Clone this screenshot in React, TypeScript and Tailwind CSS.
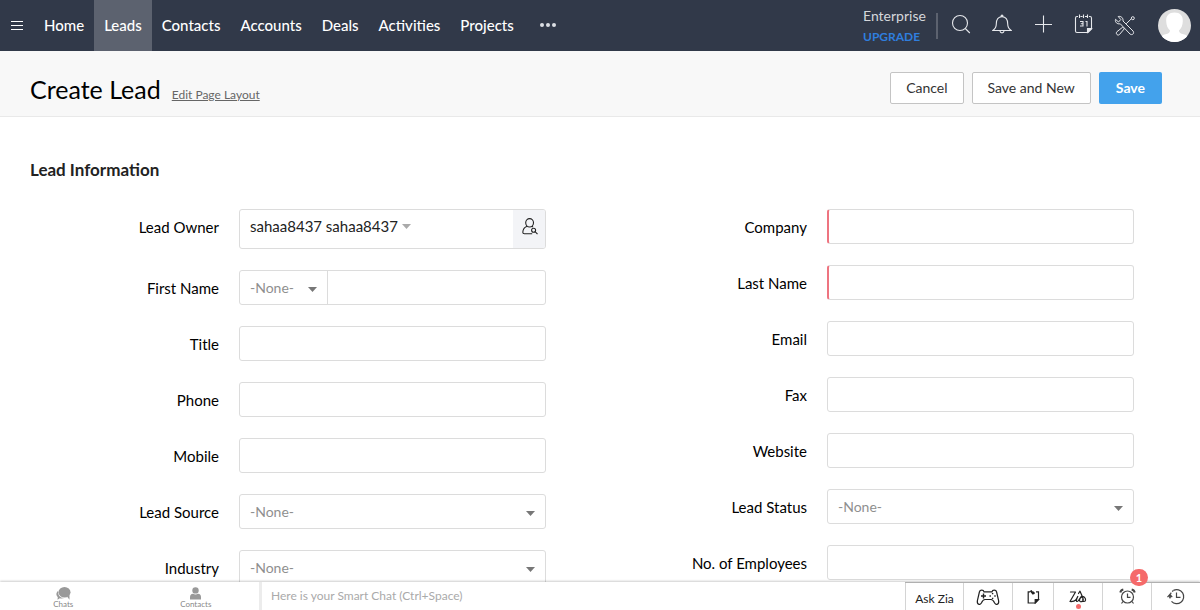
import React from "react";

const NAV = ["Home", "Leads", "Contacts", "Accounts", "Deals", "Activities", "Projects"];

type FieldKind = "text" | "required" | "select" | "owner" | "name";
type Field = { id: string; label: string; kind: FieldKind };

const LEFT: Field[] = [
  { id: "lead-owner", label: "Lead Owner", kind: "owner" },
  { id: "first-name", label: "First Name", kind: "name" },
  { id: "title", label: "Title", kind: "text" },
  { id: "phone", label: "Phone", kind: "text" },
  { id: "mobile", label: "Mobile", kind: "text" },
  { id: "lead-source", label: "Lead Source", kind: "select" },
  { id: "industry", label: "Industry", kind: "select" },
];

const RIGHT: Field[] = [
  { id: "company", label: "Company", kind: "required" },
  { id: "last-name", label: "Last Name", kind: "required" },
  { id: "email", label: "Email", kind: "text" },
  { id: "fax", label: "Fax", kind: "text" },
  { id: "website", label: "Website", kind: "text" },
  { id: "lead-status", label: "Lead Status", kind: "select" },
  { id: "employees", label: "No. of Employees", kind: "text" },
];

function Caret({ className }: { className: string }) {
  return (
    <svg viewBox="0 0 9 5" className={`h-[5px] w-[9px] ${className}`} fill="currentColor" aria-hidden="true">
      <path d="M0 0h9L4.5 5z" />
    </svg>
  );
}

function NoneSelect({ id, label }: { id: string; label?: string }) {
  return (
    <div className="grid h-full flex-1 items-center">
      <select
        id={id}
        aria-label={label}
        className="col-start-1 row-start-1 h-full w-full appearance-none bg-transparent pl-[10px] pr-6 text-[14px] text-[#8f8f8f] outline-none"
      >
        <option>-None-</option>
      </select>
      <Caret className="pointer-events-none col-start-1 row-start-1 mr-[10px] mt-1 justify-self-end text-[#777]" />
    </div>
  );
}

function Control({ field }: { field: Field }) {
  const box = "flex min-w-0 flex-1 overflow-hidden rounded-[3px] border border-[#dcdcdc] bg-white";
  switch (field.kind) {
    case "owner":
      return (
        <div className={`${box} h-10`}>
          <div className="flex flex-1 items-center pb-[5px] pl-[10px]">
            <select
              id={field.id}
              className="appearance-none bg-transparent text-[15px] text-[#222] outline-none [field-sizing:content]"
            >
              <option>sahaa8437 sahaa8437</option>
            </select>
            <Caret className="ml-1 text-[#aaa]" />
          </div>
          <button type="button" aria-label="Find user" className="flex w-8 items-center justify-center bg-[#f3f4f7] pb-[6px] pl-[2px]">
            <svg viewBox="0 0 16 17" className="h-[17px] w-4" fill="none" stroke="#222" strokeWidth="1.1" aria-hidden="true">
              <ellipse cx="7.6" cy="4.8" rx="3.9" ry="4.2" />
              <path d="M5.2 8.3C2.6 9.2 1 11.300 .8 14.200c0 1.200.4 1.500 1.600 1.500h7.800M9.800 8.300l1.200.7" />
              <circle cx="11.600" cy="12.200" r="2" />
              <path d="m13.100 13.700 2.400 2.400" />
            </svg>
          </button>
        </div>
      );
    case "name":
      return (
        <div className={`${box} h-[35px]`}>
          <div className="flex w-[88px] border-r border-[#dcdcdc]">
            <NoneSelect id="salutation" label="Salutation" />
          </div>
          <input id={field.id} type="text" className="min-w-0 flex-1 px-[10px] text-[15px] outline-none" />
        </div>
      );
    case "select":
      return (
        <div className={`${box} h-[35px]`}>
          <NoneSelect id={field.id} />
        </div>
      );
    case "required":
      return (
        <div className={`${box} h-[35px] border-l-2 border-l-[#ee7480]`}>
          <input id={field.id} type="text" required className="min-w-0 flex-1 px-[10px] text-[15px] outline-none" />
        </div>
      );
    default:
      return (
        <div className={`${box} h-[35px]`}>
          <input id={field.id} type="text" className="min-w-0 flex-1 px-[10px] text-[15px] outline-none" />
        </div>
      );
  }
}

function Column({ fields }: { fields: Field[] }) {
  return (
    <div className="flex flex-col gap-[21px] pr-[42px]">
      {fields.map((f) => (
        <div key={f.id} className="flex items-start gap-5">
          <label htmlFor={f.id} className="w-[219px] shrink-0 pt-[3px] text-right text-[15px] leading-[31px] text-black">
            {f.label}
          </label>
          <Control field={f} />
        </div>
      ))}
    </div>
  );
}

function TopBar() {
  const stroke = { fill: "none", stroke: "#e6e8ec", strokeWidth: 1.1 } as const;
  return (
    <header className="flex h-[51px] shrink-0 items-stretch bg-[#313949] text-white">
      <button type="button" aria-label="Menu" className="flex w-[34px] items-center justify-center">
        <svg viewBox="0 0 12 10" className="h-[10px] w-3" stroke="#fff" strokeWidth="1" aria-hidden="true">
          <path d="M0 .5h12M0 4.500h12M0 8.500h12" />
        </svg>
      </button>
      <nav className="flex">
        {NAV.map((n) => (
          <a
            key={n}
            href="#"
            className={`flex items-center px-[10px] text-[15px] font-medium ${n === "Leads" ? "bg-[#5c626f]" : ""}`}
          >
            {n}
          </a>
        ))}
      </nav>
      <button type="button" aria-label="More modules" className="flex w-12 items-center justify-center pb-[2px]">
        <svg viewBox="0 0 16 4" className="h-1 w-4" fill="#dcdfe4" aria-hidden="true">
          <circle cx="2" cy="2" r="2" />
          <circle cx="8" cy="2" r="2" />
          <circle cx="14" cy="2" r="2" />
        </svg>
      </button>
      <div className="ml-auto flex items-center pr-[9px]">
        <div className="flex h-[26px] w-[75px] flex-col justify-center border-r-2 border-[#5c626f]">
          <span className="text-[14px] leading-[21px] text-[#d5d7db]">Enterprise</span>
          <a href="#" className="text-[12px] font-bold leading-[21px] text-[#2f7ede]">UPGRADE</a>
        </div>
        <div className="ml-[13px] flex items-center gap-[21px] pb-[3px]">
          <button type="button" aria-label="Search" className="flex w-5 justify-center">
            <svg viewBox="0 0 20 20" className="size-5" {...stroke}>
              <circle cx="9" cy="9" r="7.500" />
              <path d="m14.300 14.500 4.500 4.500" />
            </svg>
          </button>
          <button type="button" aria-label="Notifications" className="flex w-5 justify-center">
            <svg viewBox="0 0 20 20" className="size-5" {...stroke}>
              <path d="M.8 16.500c2.500-1.700 3.500-3.500 3.500-6.500 0-4.500 1.900-7.300 5.700-7.300s5.700 2.800 5.700 7.300c0 3 1 4.800 3.500 6.500zM9 2.500c0-1.800 2-1.800 2 0M8 17c.2 2.500 3.800 2.500 4 0" />
            </svg>
          </button>
          <button type="button" aria-label="Create" className="flex w-5 justify-center">
            <svg viewBox="0 0 20 20" className="size-5" {...stroke}>
              <path d="M10.500 1.500v17M2 10.500h17" />
            </svg>
          </button>
          <button type="button" aria-label="Calendar" className="flex w-5 justify-center">
            <svg viewBox="0 0 20 20" className="size-5" {...stroke}>
              <path d="M4 2.500H3Q1.500 2.500 1.500 4v13q0 1.500 1.500 1.500h11l3.500-3.500V4q0-1.500-1.500-1.500h-1M6.500 2.500h2M11 2.500h2M5.500 .5V4M9.500 .5V4M13.500 .5V4" />
              <path d="M17.500 14.500h-4v4z" fill="#e6e8ec" />
              <path d="M6 7.500h3v4.500H6M6.800 9.700H9M11.500 7.500h1.500v5" />
            </svg>
          </button>
        </div>
        <button type="button" aria-label="Setup" className="ml-5 flex w-[22px] justify-center">
          <svg viewBox="0 0 22 22" className="size-[22px]" {...stroke} strokeWidth="1" strokeLinejoin="round">
            <path d="M4.200 1.500 6.800 4.500 4.500 7 1.500 4.300C.8 7 3 9.500 6.300 8.800L16 19c2.200 1.800 4.800-.8 3-3L9 6C9.500 3 7 .8 4.200 1.500z" />
            <path d="m12.200 8.800 5.300-5.200" />
            <circle cx="18.800" cy="3.200" r="1.500" />
            <path d="m8.700 12.200 1.600 1.600-4.800 5.700c-1.700 1.700-4.300-.8-2.700-2.700z" />
          </svg>
        </button>
        <a href="#" aria-label="Profile" className="ml-[22px]">
          <svg viewBox="0 0 33 33" className="size-[33px] rounded-full" aria-hidden="true">
            <rect width="33" height="33" fill="#dedede" />
            <path
              fill="#fff"
              d="M16.500 3.500c5.500 0 8.500 3 8.300 8.500-.1 4.500-1.500 7.500-3.800 9.500.2 2.500 1.500 3.200 4.500 3.800 3 .6 4.500 2 5 3.500L27 33H6l-3.500-4.200c.5-1.500 2-2.900 5-3.500 3-.6 4.300-1.300 4.500-3.800-2.300-2-3.700-5-3.800-9.500-.2-5.500 2.800-8.500 8.300-8.500z"
            />
          </svg>
        </a>
      </div>
    </header>
  );
}

function BottomBar() {
  const cell = "flex items-center justify-center border-l border-[#d4d4d4]";
  const ink = { fill: "none", stroke: "#222", strokeWidth: 1.2 } as const;
  return (
    <footer className="relative flex h-7 shrink-0 bg-white shadow-[0_-1px_2px_rgba(0,0,0,0.2)]">
      <div className="grid w-[262px] shrink-0 grid-cols-2 border-r-[3px] border-[#ececec] text-[8px] leading-[9px] text-[#888]">
        <button type="button" className="flex flex-col items-center pr-[3px] pt-[5px]">
          <svg viewBox="0 0 15 13" className="h-[13px] w-[15px] shrink-0" fill="#999" aria-hidden="true">
            <ellipse cx="8.500" cy="5.300" rx="6" ry="5.200" />
            <path d="m11 9.500 2.500 3.300V8zM2.300 3.800C-.5 6 .2 8.800 1.800 10L1.500 12.800l2.300-1.500c1.500.4 3.200.2 4.400-.2C4.500 11 1.500 8 2.300 3.800z" />
          </svg>
          Chats
        </button>
        <button type="button" className="flex flex-col items-center pl-[3px] pt-[5px]">
          <svg viewBox="0 0 13 13" className="size-[13px] shrink-0" fill="#999" aria-hidden="true">
            <circle cx="6.500" cy="3.400" r="3.200" />
            <path d="M1 12.500V10Q1 7 4 6.800q2.500 1.200 5 0 3 .2 3 3.200v2.500z" />
          </svg>
          Contacts
        </button>
      </div>
      <input
        type="text"
        aria-label="Smart Chat"
        placeholder="Here is your Smart Chat (Ctrl+Space)"
        className="min-w-0 flex-1 px-[9px] text-[12px] outline-none placeholder:text-[#aaa]"
      />
      <div className="flex border-t border-[#b0b0b0]">
        <button type="button" className={`${cell} w-[58px] pt-1 text-[12px] text-[#222]`}>Ask Zia</button>
        <button type="button" aria-label="Games" className={`${cell} w-[49px] pt-[2px]`}>
          <svg viewBox="0 0 24 17" className="h-[17px] w-6" {...ink}>
            <path d="M8 2.800h8c.4-2 4-2.300 4.600.2l2 8.500c.7 3.800-2.600 5.300-4.100 2.300-1-2.300-1.700-3.300-3.500-3.300H9c-1.800 0-2.500 1-3.500 3.300-1.500 3-4.800 1.500-4.100-2.300l2-8.500C4 .5 7.600.8 8 2.800z" />
            <path d="M7.500 4.500v5M5 7h5" strokeWidth="1.400" />
            <path d="M15.900 4.600h1.400M15.900 9.400h1.400M14.200 6.300v1.400M19 6.300v1.400" strokeWidth="1.400" />
          </svg>
        </button>
        <button type="button" aria-label="Notes" className={`${cell} w-[41px]`}>
          <svg viewBox="0 0 13 14" className="h-[14px] w-[13px]" {...ink}>
            <path d="M3 1.800H1.200V13h7L11.500 9.500V1.800H9" />
            <path d="M11.500 9.500H8.200V13z" fill="#222" />
            <path d="m3.500.5 3 3.500M5.500 2l2 1.800" strokeWidth="2" />
          </svg>
        </button>
        <button type="button" aria-label="Zia" className={`${cell} relative w-[49px]`}>
          <svg viewBox="0 0 18 14" className="h-[14px] w-[18px]" {...ink} strokeLinecap="round" strokeLinejoin="round">
            <path d="M1.500 2h5L1 11.500c2.800.2 4.300.1 5.800-1.500l2-3.500c-1.500 2.800-2 5.200-.5 5 1.700-.2 2.700-4.500 4.700-5.700l1.200 3.500c.5 2.500-3.700 3.500-3.700 1 0-2.500 3.500-4.500 5-3 1.500 1.700 1.500 4-.5 4.200-1.200 0-1.500-1.800-1-3.200M9.500 3.500 11 1.200l2 4.600" />
          </svg>
          <span className="absolute bottom-[1px] left-[22px] size-[5px] rounded-full bg-[#f56a6a]" />
        </button>
        <button type="button" aria-label="Reminders, 1 new" className={`${cell} relative w-[49px]`}>
          <svg viewBox="0 0 17 17" className="size-[17px]" {...ink} stroke="#444">
            <circle cx="8.500" cy="9" r="6" />
            <path d="M8.500 5.500V9.300h3M4 13.500l-1.500 2M13 13.500l1.500 2" />
            <path d="M1.300 4.500c.3-1.700 1.300-2.600 3-3M15.700 4.500c-.3-1.700-1.300-2.600-3-3" strokeWidth="2" />
          </svg>
          <span className="absolute -top-[14px] right-[3px] flex h-[17px] w-[18px] items-center justify-center rounded-full bg-[#f56a6a] text-[11px] font-bold leading-none text-white">
            1
          </span>
        </button>
        <button type="button" aria-label="Recent items" className={`${cell} w-[49px]`}>
          <svg viewBox="0 0 18 17" className="h-[17px] w-[18px]" {...ink} stroke="#444">
            <path d="M4.500 13.300A7 7 0 1 0 6.500 2.400" />
            <path d="M3 10c-.3-3 1-6 3.500-7.600" strokeDasharray="2 1.500" />
            <path d="M.5 9.200 2.900 6.500l2.300 2.700M3 7v3.500M9.500 4.500v4.800h4" />
          </svg>
        </button>
      </div>
    </footer>
  );
}

export default function App() {
  return (
    <div className="flex h-screen flex-col overflow-hidden bg-white font-['Lato','Open_Sans',sans-serif]">
      <TopBar />
      <div className="flex h-[66px] shrink-0 items-center border-b border-[#e9e9e9] bg-[#f8f8f8] pl-[30px] pr-[38px]">
        <div className="flex flex-1 items-baseline gap-[11px] pt-[10px]">
          <h1 className="text-[25px] leading-8 text-black">Create Lead</h1>
          <a href="#" className="text-[12px] text-[#666] underline">Edit Page Layout</a>
        </div>
        <div className="flex gap-2 pt-2 text-[14px]">
          <button type="button" className="h-8 rounded-[2px] border border-[#c4c4c4] bg-white px-[15px] text-[#333]">Cancel</button>
          <button type="button" className="h-8 rounded-[2px] border border-[#c4c4c4] bg-white px-[15px] text-[#333]">Save and New</button>
          <button type="button" className="h-8 rounded-[2px] bg-[#43a2ec] px-[17px] font-bold text-white">Save</button>
        </div>
      </div>
      <main className="min-h-0 flex-1 overflow-hidden">
        <h2 className="px-[30px] pt-[41px] text-[17px] font-bold leading-6 text-[#222]">Lead Information</h2>
        <form className="grid grid-cols-2 pr-6 pt-[27px]">
          <Column fields={LEFT} />
          <Column fields={RIGHT} />
        </form>
      </main>
      <BottomBar />
    </div>
  );
}
